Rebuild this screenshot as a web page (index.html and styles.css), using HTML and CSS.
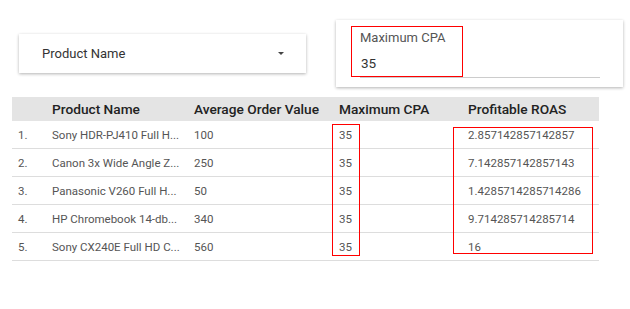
FILE: index.html
```html
<!DOCTYPE html>
<html lang="en">
  <head>
    <meta charset="UTF-8" />
    <meta name="viewport" content="width=device-width, initial-scale=1.0" />
    <title>ROAS Calculator</title>
    <link rel="stylesheet" href="styles.css">
  </head>
  <body>
    <div class="controls">
      <div class="dropdown">
        <span>Product Name</span>
        <svg class="caret" width="6" height="3" viewBox="0 0 6 3"><path d="M0 0h6L3 3z" fill="#444"/></svg>
      </div>
      <div class="cpa-card">
        <label class="cpa-label" for="cpa">Maximum CPA</label>
        <div class="cpa-value" id="cpa">35</div>
        <div class="underline"></div>
        <div class="mark mark-input"></div>
      </div>
    </div>

    <div class="table-wrap">
      <table class="results">
        <thead>
          <tr>
            <th class="col-num"></th>
            <th class="col-name">Product Name</th>
            <th class="col-aov">Average Order Value</th>
            <th class="col-cpa">Maximum CPA</th>
            <th class="col-roas">Profitable ROAS</th>
          </tr>
        </thead>
        <tbody>
          <tr><td>1.</td><td>Sony HDR-PJ410 Full H...</td><td>100</td><td>35</td><td>2.857142857142857</td></tr>
          <tr><td>2.</td><td>Canon 3x Wide Angle Z...</td><td>250</td><td>35</td><td>7.142857142857143</td></tr>
          <tr><td>3.</td><td>Panasonic V260 Full H...</td><td>50</td><td>35</td><td>1.4285714285714286</td></tr>
          <tr><td>4.</td><td>HP Chromebook 14-db...</td><td>340</td><td>35</td><td>9.714285714285714</td></tr>
          <tr><td>5.</td><td>Sony CX240E Full HD C...</td><td>560</td><td>35</td><td>16</td></tr>
        </tbody>
      </table>
      <div class="mark mark-cpa"></div>
      <div class="mark mark-roas"></div>
    </div>
  </body>
</html>
```

FILE: styles.css
```css
body {
  font-family: Roboto, "Liberation Sans", sans-serif;
  margin: 0;
  padding: 0;
  background-color: #fff;
  color: #333;
}

/* Top controls */
.controls {
  display: flex;
  align-items: flex-start;
  gap: 30px;
  padding: 20px 0 0 19px;
}

.dropdown {
  margin-top: 14px;
  width: 287px;
  height: 39px;
  box-sizing: border-box;
  display: flex;
  align-items: center;
  justify-content: space-between;
  padding: 0 22px 0 23px;
  background-color: #fff;
  box-shadow: 0 1px 3px rgba(0, 0, 0, 0.3);
  font-size: 13px;
  color: #333;
}

.caret {
  display: block;
}

.cpa-card {
  position: relative;
  width: 287px;
  height: 67px;
  box-sizing: border-box;
  padding: 10px 23px 0 24px;
  background-color: #fff;
  box-shadow: 0 1px 3px rgba(0, 0, 0, 0.3);
}

.cpa-label {
  display: block;
  font-size: 13px;
  color: #555;
  line-height: 15px;
}

.cpa-value {
  font-size: 13.5px;
  color: #333;
  line-height: 15px;
  margin-top: 11px;
  padding-left: 1px;
}

.underline {
  margin-top: 6px;
  height: 1px;
  background-color: #ccc;
}

/* Table */
.table-wrap {
  position: relative;
  margin: 10px 0 0 12px;
  width: 587px;
}

.results {
  width: 587px;
  border-collapse: collapse;
  table-layout: fixed;
  font-size: 11.5px;
}

.results th {
  height: 24px;
  padding: 0 0 0 6px;
  background-color: #e4e4e4;
  color: #222;
  font-size: 13.7px;
  font-weight: 500;
  text-align: left;
  white-space: nowrap;
}

.results td {
  height: 27px;
  padding: 0 0 0 6px;
  border-bottom: 1px solid #ddd;
  color: #555;
  white-space: nowrap;
}

.col-num { width: 28px; }
.col-name { width: 136px; }
.col-aov { width: 139px; }
.col-cpa { width: 123px; }

/* Red annotation boxes */
.mark {
  position: absolute;
  border: 1px solid #f00;
  box-sizing: border-box;
}

.mark-input {
  left: 15px;
  top: 6px;
  width: 112px;
  height: 51px;
}

.mark-cpa {
  left: 320px;
  top: 27px;
  width: 28px;
  height: 132px;
}

.mark-roas {
  left: 441px;
  top: 30px;
  width: 140px;
  height: 127px;
}
```
